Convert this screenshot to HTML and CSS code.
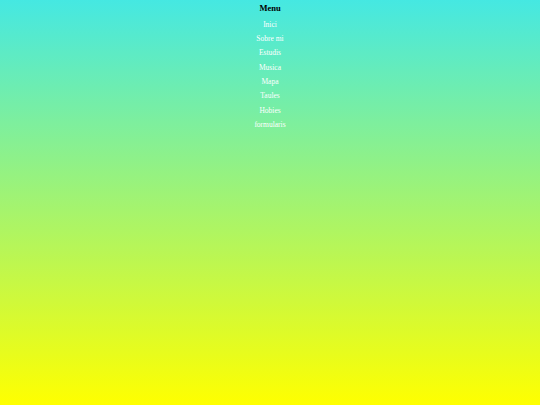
FILE: index.html
```html
<!DOCTYPE html>
<html>
<head>
<meta charset="utf-8">
<link rel="stylesheet" href="styles.css">
</head>
<body>
<nav class="menu">
  <h3 class="menu-title">Menu</h3>
  <ul class="menu-list">
    <li><a href="#">Inici</a></li>
    <li><a href="#">Sobre mi</a></li>
    <li><a href="#">Estudis</a></li>
    <li><a href="#">Musica</a></li>
    <li><a href="#">Mapa</a></li>
    <li><a href="#">Taules</a></li>
    <li><a href="#">Hobies</a></li>
    <li><a href="#">formularis</a></li>
  </ul>
</nav>
</body>
</html>
```
FILE: styles.css
```css
html, body {
  margin: 0;
  height: 100%;
}
body {
  background: linear-gradient(to bottom, #45e8e2, #ffff00);
  font-family: "Liberation Serif", "Times New Roman", serif;
}
.menu {
  text-align: center;
  padding-top: 3px;
}
.menu-title {
  margin: 0;
  font-size: 8.5px;
  line-height: 11px;
  font-weight: bold;
  color: #000;
}
.menu-list {
  list-style: none;
  margin: 3.5px 0 0;
  padding: 0;
}
.menu-list li {
  font-size: 7.5px;
  line-height: 14.35px;
}
.menu-list a {
  color: #ffffff;
  text-decoration: none;
}
```
